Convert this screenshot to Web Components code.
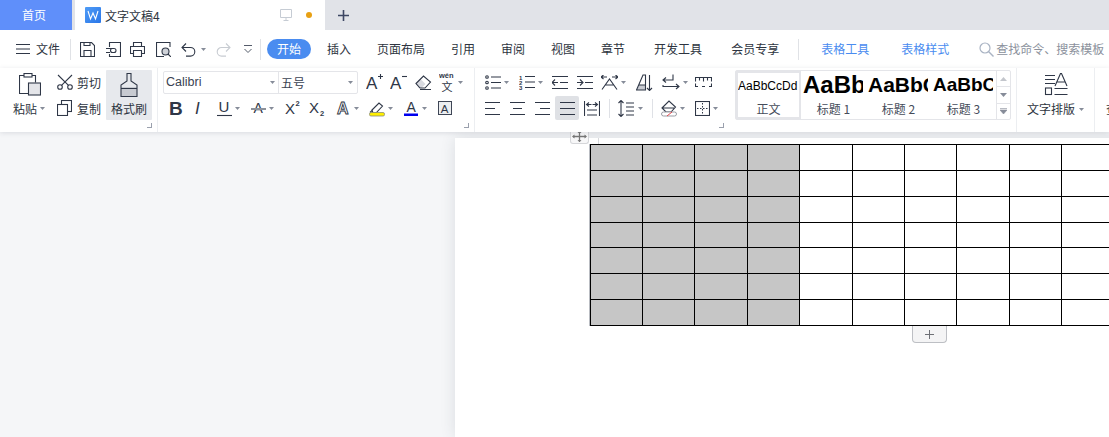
<!DOCTYPE html>
<html lang="zh"><head><meta charset="utf-8"><title>文字文稿4</title>
<style>
html,body{margin:0;padding:0;width:1109px;height:437px;overflow:hidden;background:#f5f6f8;font:12px "Noto Sans CJK SC","Liberation Sans",sans-serif;color:#2d3440}
</style></head><body>
<wps-app></wps-app>
<script>
const S='fill="none" stroke="#2f3747" stroke-width="1.1"';
const T='font-family="Liberation Sans" fill="#2f3747"';
const ICONS={
 menu:[14,10,`<path ${S} d="M0 .5h14M0 5h14M0 9.5h14"/>`],
 save:[15,15,`<path ${S} d="M.5.5h11l3 3v11H.5zM4 14.5V8.5h7v6M4 .5v3h6v-3"/>`],
 export:[15,15,`<path ${S} d="M3.5 5V.5h11v14h-11v-2.5M0 6.5h8a2 2 0 0 1 0 4H6.5a2 2 0 0 1 0-4M0 10.5h4"/>`],
 print:[15,15,`<path ${S} d="M3.5 4.500V.5h8v4M3.500 11.500H.5v-7h14v7h-3M3.500 8.500h8v6h-8z"/>`],
 preview:[15,15,`<path ${S} d="M14 5V.5H.5v14H8"/><circle cx="9.500" cy="9.500" r="3.500" fill="#cfd2d8" stroke="#2f3747" stroke-width="1.100"/><path ${S} d="M12 12l3 3"/>`],
 undo:[15,15,`<path ${S} d="M5 1.500L1 5.500l4 4M1 5.500h8.500a4.300 4.300 0 0 1 0 8.600H5"/>`],
 redo:[15,15,`<path fill="none" stroke="#c8ccd2" stroke-width="1.100" d="M10 1.500l4 4-4 4M14 5.500H5.500a4.300 4.300 0 0 0 0 8.600H10"/>`],
 more:[8,9,`<path fill="none" stroke="#555c6b" d="M0 .5h8M.5 4L4 7.500 7.500 4"/>`],
 search:[15,15,`<circle cx="6" cy="6" r="5" fill="none" stroke="#a9b3c3" stroke-width="1.200"/><path stroke="#a9b3c3" stroke-width="1.400" d="M9.500 9.500l5 5"/>`],
 paste:[22,24,`<path ${S} d="M13 2.500h3.500v7M9.500 20.500H.5v-18H5"/><rect x="5" y=".5" width="8" height="3.500" fill="#fff" stroke="#2f3747" stroke-width="1.100"/><rect x="9.500" y="10" width="12" height="12" fill="#e4e5e9" stroke="#2f3747" stroke-width="1.100"/>`],
 cut:[16,16,`<circle cx="3" cy="13" r="2.300" ${S}/><circle cx="13" cy="13" r="2.300" ${S}/><path ${S} d="M1 1l10.500 10.300M15 1L4.500 11.300"/>`],
 copy:[15,16,`<rect x="4.500" y=".5" width="10" height="11" ${S}/><rect x=".5" y="4.500" width="10" height="11" fill="#fff" stroke="#2f3747" stroke-width="1.100"/>`],
 brush:[18,24,`<path fill="#c7cad1" d="M1 14h16v9H1z"/><path ${S} d="M7 .5h4V8l6 4v11.500H1V12l6-4zM1 15.500h16"/>`],
 bold:[14,18,`<text x="0" y="15.500" font-size="19" font-weight="700" ${T}>B</text>`],
 ital:[10,18,`<text x="0" y="15" font-size="17" font-style="italic" ${T}>I</text>`],
 under:[15,18,`<text x="1.500" y="13" font-size="15" ${T}>U</text><path ${S} d="M0 16.500h15"/>`],
 strike:[15,18,`<text x="2.500" y="13.500" font-size="14" ${T}>A</text><path fill="none" stroke="#fff" stroke-width="2" d="M0 10h15"/><path ${S} d="M0 10h15"/>`],
 sup:[16,18,`<text x="0" y="15" font-size="15" ${T}>X</text><text x="10.500" y="7" font-size="7.500" font-weight="700" ${T}>2</text>`],
 sub:[18,18,`<text x="0" y="14" font-size="15" ${T}>X</text><text x="11" y="16.500" font-size="7.500" font-weight="700" ${T}>2</text>`],
 aout:[15,18,`<text x="1" y="15" font-size="16" font-weight="700" fill="#fff" stroke="#2f3747" stroke-width=".9" font-family="Liberation Sans">A</text>`],
 hilite:[16,18,`<path ${S} d="M3 11l7-7 3.500 3-6.500 7H4zM1 13.500l2-2"/><rect x=".5" y="13.500" width="15" height="3.500" rx="1.500" fill="#ffef00" stroke="#8c8d7a" stroke-width=".8"/>`],
 acolor:[15,18,`<text x="2.500" y="13" font-size="14" ${T}>A</text><rect x="0" y="14.500" width="14" height="2.500" fill="#0000ee"/>`],
 abox:[14,14,`<rect x=".5" y=".5" width="13" height="13" fill="#eceef0" stroke="#3e4656"/><text x="2.800" y="11.500" font-size="11.500" ${T}>A</text>`],
 aplus:[17,18,`<text x="0" y="16" font-size="17" ${T}>A</text><path ${S} d="M12 3.500h5M14.500 1v5"/>`],
 aminus:[17,18,`<text x="0" y="16" font-size="17" ${T}>A</text><path ${S} d="M12 3.500h5"/>`],
 eraser:[17,15,`<path fill="#d8dae0" d="M1 8.500L5.500 4l5 5-4 4H4z"/><path ${S} d="M1 8.500L8.500 1l7 6-5.500 6H5zM5 14.500h11"/>`],
 wen:[16,20,`<text x="0" y="6" font-size="7.500" font-weight="700" ${T}>wén</text><text x="2.500" y="19" font-size="11" font-family="Noto Sans CJK SC" fill="#2f3747">文</text>`],
 bullet:[16,15,`<circle cx="2" cy="2" r="1.300" ${S}/><circle cx="2" cy="7.500" r="1.300" ${S}/><circle cx="2" cy="13" r="1.300" ${S}/><path ${S} d="M6 2h10M6 7.500h10M6 13h10"/>`],
 num:[16,16,`<text x="0" y="5.500" font-size="6" font-weight="700" ${T}>1</text><text x="0" y="11" font-size="6" font-weight="700" ${T}>2</text><text x="0" y="16" font-size="6" font-weight="700" ${T}>3</text><path ${S} d="M6 2.500h10M6 8h10M6 13.500h10"/>`],
 outdent:[16,13,`<path ${S} d="M0 .5h16M8 6.500h8M0 12.500h16M0 6.500h6M3 3.500l-3 3 3 3"/>`],
 indent:[16,13,`<path ${S} d="M0 .5h16M8 6.500h8M0 12.500h16M0 6.500h6M3 3.500l3 3-3 3"/>`],
 cnlay:[17,15,`<path ${S} d="M0 2h6M2.500 0L0 2l2.500 2M17 2h-6M14.500 0L17 2l-2.500 2M1 14.500L8.500 4 16 14.500M4 10h9"/>`],
 sort:[17,17,`<path fill="#c7cad1" d="M3 11h6v5H1z"/><path ${S} d="M.5 16L7 1h2.500v15zM.5 16h9M3 11h6.500M13.500 1v15.500M11 14l2.500 2.500L16 14"/>`],
 ret:[18,16,`<path ${S} d="M11 .5v5.500H1M4 3.500L1 6l3 2.500M1 11v1.500h16M14 10l3 2.500-3 2.500"/>`],
 ruler:[17,10,`<path ${S} d="M.5 4.500v-4h16v4M4.500 .5v3M8.500 .5v4M12.500 .5v3M.5 6.500v3h2.500M7 9.500h3M14 9.500h2.500v-3"/>`],
 al:[15,13,`<path ${S} d="M0 .5h15M0 6.500h10M0 12.500h15"/>`],
 ac:[15,13,`<path ${S} d="M0 .5h15M3 6.500h9M0 12.500h15"/>`],
 ar:[15,13,`<path ${S} d="M0 .5h15M5 6.500h10M0 12.500h15"/>`],
 aj:[15,13,`<path ${S} d="M0 .5h15M0 6.500h15M0 12.500h15"/>`],
 dist:[16,15,`<path ${S} d="M.5 0v15M15.500 0v15M3 9h10M3 14h10M2.500 3.500h5M5 1.500l-2.500 2 2.500 2M8.500 3.500h5M11 1.500l2.500 2-2.500 2"/>`],
 lspace:[17,17,`<path ${S} d="M3 .5v16M.5 3L3 .5 5.500 3M.5 14L3 16.500 5.500 14M8 3h8M8 7h8M8 11h8M8 15h8"/>`],
 shade:[16,18,`<path ${S} d="M1 9l7-7 6.500 6-4.500 5H5zM1 9h13"/><rect x=".5" y="13" width="15" height="4" rx="2" fill="#fff" stroke="#9a9da5"/><path stroke="#e5484d" d="M6 17l5-4"/>`],
 border:[15,15,`<rect x=".5" y=".5" width="14" height="14" ${S}/><path fill="none" stroke="#2f3747" stroke-dasharray="1.500 1.500" d="M7.500 2v11M2 7.500h11"/>`],
 arrange:[24,23,`<path ${S} d="M1 2.500h10M1 6.500h10M1 10.500h10"/><rect x="1.500" y="15" width="6" height="6.500" ${S}/><path ${S} d="M11 13l5.500-12.500h1L23 13M13 9h8.500M10.500 15.500h13M10.500 21.500h13"/>`]
};
function svg(name){const [w,h,b]=ICONS[name];return `<svg xmlns="http://www.w3.org/2000/svg" width="${w}" height="${h}" viewBox="0 0 ${w} ${h}" style="display:block;flex:none">${b}</svg>`}
const CARET=`<svg width="5" height="3" viewBox="0 0 5 3" style="display:block;flex:none"><path d="M0 0h5L2.500 3z" fill="#868c99"/></svg>`;
class Base extends HTMLElement{
 constructor(){super();this.attachShadow({mode:'open'})}
 connectedCallback(){this.shadowRoot.innerHTML=this.render()}
}
customElements.define('wps-icon',class extends Base{
 render(){return `<style>:host{display:block;flex:none}</style>${svg(this.getAttribute('name'))}`}
});
customElements.define('wps-tool',class extends Base{
 render(){const w=this.getAttribute('w'),act=this.hasAttribute('active');
  return `<style>:host{display:flex;flex:none;align-items:center;gap:3px;height:26px;width:${w}px}
  .box{display:flex;align-items:center;justify-content:center;width:24px;height:24px;border-radius:2px;background:#dfe1e5}</style>
  ${act?`<div class="box">${svg(this.getAttribute('icon'))}</div>`:svg(this.getAttribute('icon'))}${this.hasAttribute('caret')?CARET:''}`}
});
customElements.define('wps-vsep',class extends Base{
 render(){return `<style>:host{display:flex;flex:none;width:${this.getAttribute('w')}px;height:26px;align-items:center}
 i{display:block;width:1px;height:19px;background:#dfe1e6}</style><i></i>`}
});
customElements.define('wps-corner',class extends Base{
 render(){return `<style>:host{position:absolute;right:${this.getAttribute('r')}px;top:55px;width:5px;height:5px;border-right:1px solid #9aa0ad;border-bottom:1px solid #9aa0ad;box-sizing:border-box}</style>`}
});
customElements.define('wps-tabbar',class extends Base{
 render(){return `<style>:host{display:flex;height:30px;background:#e1e3e8;color:#2d3440}
 .home{width:72px;background:#5f8ffa;color:#fff;display:flex;align-items:center;justify-content:center;padding:0 4px 2px 0;box-sizing:border-box;margin-right:3px}
 .doc{width:250px;background:#fff;display:flex;align-items:center;padding-left:10px;box-sizing:border-box}
 .w{width:16px;height:16px;border-radius:1px;background:linear-gradient(135deg,#4f9cf6,#2a76e8);margin-right:4px;flex:none}
 .w svg{display:block}
 .name{flex:1}
 .dot{width:6px;height:6px;border-radius:50%;background:#e8a013;margin:0 13px 0 14px}
 .plus{width:36px;display:flex;align-items:center;justify-content:center}</style>
 <div class="home">首页</div>
 <div class="doc"><div class="w"><svg width="16" height="16" viewBox="0 0 16 16"><path d="M3 4l2.500 8L8 6l2.500 6L13 4" fill="none" stroke="#fff" stroke-width="1.100"/></svg></div>
 <span class="name">文字文稿4</span>
 <svg width="12" height="12" viewBox="0 0 12 12"><path d="M.5.5h11v8H.5zM6 8.500V11.500M3.500 11.500h5" fill="none" stroke="#c6ccd4"/></svg>
 <span class="dot"></span></div>
 <div class="plus"><svg width="11" height="11" viewBox="0 0 11 11"><path d="M5.500 0v11M0 5.500h11" stroke="#3d4763" stroke-width="1.600"/></svg></div>`}
});
customElements.define('wps-menubar',class extends Base{
 render(){
 const m=(t,x,c='')=>`<span class="t ${c}" style="margin-left:${x}px">${t}</span>`;
 return `<style>:host{display:flex;align-items:center;height:38px;background:#fff;padding-left:16px;white-space:nowrap;color:#2d3440;overflow:hidden}
 .t{margin-bottom:2px}
 .sep{width:1px;height:21px;background:#e0e2e6;flex:none}
 .pill{background:#4a8cf0;color:#fff;border-radius:10px;width:44px;height:20px;line-height:19px;text-align:center}
 .b{color:#4a8cf0}.g{color:#8b919c}
 .c{display:flex;flex:none;align-items:center;gap:5px}
 wps-icon{flex:none}</style>
 <wps-icon name="menu"></wps-icon>${m('文件',6)}
 <span class="sep" style="margin-left:10px"></span>
 <wps-icon name="save" style="margin-left:9px"></wps-icon>
 <wps-icon name="export" style="margin-left:11px"></wps-icon>
 <wps-icon name="print" style="margin-left:9px"></wps-icon>
 <wps-icon name="preview" style="margin-left:11px"></wps-icon>
 <div class="c" style="margin-left:10px"><wps-icon name="undo"></wps-icon>${CARET}</div>
 <wps-icon name="redo" style="margin-left:10px"></wps-icon>
 <wps-icon name="more" style="margin-left:13px"></wps-icon>
 <span class="sep" style="margin-left:8px"></span>
 <span class="pill" style="margin-left:6px">开始</span>
 ${m('插入',16)}${m('页面布局',26)}${m('引用',26)}${m('审阅',26)}${m('视图',26)}${m('章节',26)}${m('开发工具',29)}${m('会员专享',29)}
 <span class="sep" style="margin-left:19px"></span>
 ${m('表格工具',22,'b')}${m('表格样式',32,'b')}
 <wps-icon name="search" style="margin-left:30px"></wps-icon>${m('查找命令、搜索模板',2,'g')}`}
});
customElements.define('wps-clip-group',class extends Base{
 render(){return `<style>:host{position:relative;display:flex;flex:none;width:157px;height:63px;box-sizing:content-box;border-right:1px solid #eceef1;padding-top:1px;color:#2d3440}
 .paste{width:57px;display:flex;flex-direction:column;padding-left:13px;box-sizing:border-box}
 .paste wps-icon{margin:4px 0 0 6px}
 .pl{display:flex;align-items:center;gap:3px;height:22px}
 .mid{width:49px}.row{display:flex;align-items:center;height:26px}
 .row wps-icon{width:20px}
 .brush{width:46px;height:50px;margin-top:1px;background:#e7e9ed;display:flex;flex-direction:column;align-items:center;border-radius:1px}
 .brush wps-icon{margin:3px 0 2px}.bl{line-height:20px}</style>
 <div class="paste"><wps-icon name="paste"></wps-icon><div class="pl">粘贴${CARET}</div></div>
 <div class="mid"><div class="row"><wps-icon name="cut"></wps-icon>剪切</div><div class="row"><wps-icon name="copy"></wps-icon>复制</div></div>
 <div class="brush"><wps-icon name="brush"></wps-icon><div class="bl">格式刷</div></div>
 <wps-corner r="5"></wps-corner>`}
});
customElements.define('wps-font-group',class extends Base{
 render(){const t=(i,w,c)=>`<wps-tool icon="${i}" w="${w}" ${c?'caret':''}></wps-tool>`;
 return `<style>:host{position:relative;display:block;flex:none;width:316px;height:63px;padding-top:1px;border-right:1px solid #eceef1}
 .row{display:flex;height:26px;align-items:center}
 .r1{padding-left:5px}.r2{padding-left:11px}
 .box{display:flex;flex:none;width:195px;height:23px;border:1px solid #e4e5e9;border-radius:2px;box-sizing:border-box;margin-right:8px}
 .f{display:flex;align-items:center;justify-content:space-between;padding:0 3px 0 2px;box-sizing:border-box;color:#3a4252}
 .a{width:115px;border-right:1px solid #e4e5e9;font:12.500px "Liberation Sans",sans-serif}.b{flex:1;padding-right:4px;padding-left:2px}</style>
 <div class="row r1"><div class="box"><div class="f a">Calibri${CARET}</div><div class="f b">五号${CARET}</div></div>
 ${t('aplus',24)}${t('aminus',25)}${t('eraser',24)}${t('wen',30,1)}</div>
 <div class="row r2">${t('bold',26)}${t('ital',22)}${t('under',34,1)}${t('strike',34,1)}${t('sup',24)}${t('sub',27)}${t('aout',33,1)}${t('hilite',35,1)}${t('acolor',34,1)}${t('abox',14)}</div>
 <wps-corner r="5"></wps-corner>`}
});
customElements.define('wps-para-group',class extends Base{
 render(){const t=(i,w,c)=>`<wps-tool icon="${i}" w="${w}" ${c?'caret':''}></wps-tool>`;
 return `<style>:host{position:relative;display:block;flex:none;width:254px;height:63px;padding-top:1px;border-right:1px solid #fff}
 .row{display:flex;height:26px;align-items:center;padding-left:10px}</style>
 <div class="row">${t('bullet',34,1)}${t('num',33,1)}${t('outdent',25)}${t('indent',24)}${t('cnlay',35,1)}${t('sort',26)}${t('ret',33,1)}${t('ruler',17)}</div>
 <div class="row">${t('al',25)}${t('ac',25)}${t('ar',20)}<wps-tool icon="aj" w="29" active></wps-tool>${t('dist',25)}<wps-vsep w="9"></wps-vsep>${t('lspace',34,1)}<wps-vsep w="9"></wps-vsep>${t('shade',34,1)}${t('border',29,1)}</div>
 <wps-corner r="5"></wps-corner>`}
});
customElements.define('wps-style-cell',class extends Base{
 render(){const sel=this.hasAttribute('selected');
 return `<style>:host{display:block;flex:none;width:65px;height:48px;box-sizing:border-box;overflow:hidden;${sel?'border:2px solid #e4e5e9;':''}}
 .p{height:${sel?26:28}px;padding-left:${sel?0:2}px;margin-right:${sel?0:3}px;overflow:hidden;white-space:nowrap;display:flex;align-items:center;font-family:"Liberation Sans",sans-serif;color:#000}
 .l{text-align:center;line-height:20px;color:#454c5a}</style>
 <div class="p"><slot name="s"></slot></div><div class="l"><slot></slot></div>`}
});
customElements.define('wps-gallery-group',class extends Base{
 render(){const a=`<svg width="7" height="4" viewBox="0 0 7 4"><path d="M0 4h7L3.500 0z" fill="#c3c6cc"/></svg>`,
 d=`<svg width="7" height="4" viewBox="0 0 7 4"><path d="M0 0h7L3.500 4z" fill="#868c99"/></svg>`,
 dd=`<svg width="7" height="6" viewBox="0 0 7 6"><path d="M0 .5h7M0 2h7L3.500 6z" fill="#868c99" stroke="#868c99" stroke-width=".6"/></svg>`;
 return `<style>:host{display:block;flex:none;width:287px;padding:2px 0 0 5px;box-sizing:border-box;height:64px;border-right:1px solid #eceef1}
 .g{display:flex;width:276px;height:50px;border:1px solid #e4e5e9;border-radius:2px;box-sizing:border-box}
 .s{flex:1;border-left:1px solid #e4e5e9;display:flex;flex-direction:column}
 .s div{flex:1;display:flex;align-items:center;justify-content:center}.s div+div{border-top:1px solid #e4e5e9}
 b{display:block}</style>
 <div class="g">
 <wps-style-cell selected><span slot="s" style="font-size:12px">AaBbCcDd</span>正文</wps-style-cell>
 <wps-style-cell><b slot="s" style="font-size:24px">AaBb</b>标题 1</wps-style-cell>
 <wps-style-cell><b slot="s" style="font-size:21px">AaBbCc</b>标题 2</wps-style-cell>
 <wps-style-cell><b slot="s" style="font-size:19px">AaBbCc</b>标题 3</wps-style-cell>
 <div class="s"><div>${a}</div><div>${d}</div><div>${dd}</div></div>
 </div>`}
});
customElements.define('wps-arrange-group',class extends Base{
 render(){return `<style>:host{display:flex;flex-direction:column;align-items:center;flex:none;width:78px;height:64px;box-sizing:border-box;padding-top:5px;border-right:1px solid #eceef1;color:#2d3440}
 .l{display:flex;align-items:center;gap:4px;margin-top:3px;line-height:20px}</style>
 <wps-icon name="arrange"></wps-icon><div class="l">文字排版${CARET}</div>`}
});
customElements.define('wps-ribbon',class extends Base{
 render(){return `<style>:host{display:flex;position:relative;z-index:2;height:64px;background:#fff;box-shadow:0 1px 5px rgba(40,50,70,.13);white-space:nowrap;overflow:hidden}
 .last{padding:32px 0 0 11px;color:#2d3440}</style>
 <wps-clip-group></wps-clip-group><wps-font-group></wps-font-group><wps-para-group></wps-para-group><wps-gallery-group></wps-gallery-group><wps-arrange-group></wps-arrange-group><div class="last">查找替换</div>`}
});
customElements.define('wps-table',class extends Base{
 render(){const cols=[52,52,53,52,53,52,52,53,52,52],rows=[26,26,26,25,26,26,26];
 const tr=rows.map(h=>`<tr style="height:${h}px">${cols.map((_,i)=>`<td class="${i<4?'g':''}"></td>`).join('')}</tr>`).join('');
 return `<style>:host{display:block;width:524px;box-shadow:-1px 0 0 #b9bcc2}
 table{border-collapse:collapse;table-layout:fixed;width:521px;border-top:1px solid #000}
 td{border:1px solid #000;padding:0;background:#fff}td.g{background:#c6c6c6}</style>
 <table><colgroup>${cols.map(c=>`<col style="width:${c}px">`).join('')}</colgroup>${tr}</table>`}
});
customElements.define('wps-page',class extends Base{
 render(){return `<style>:host{display:block;position:relative;width:700px;height:299px;box-sizing:border-box;background:#fff;padding:6px 0 0 135px;box-shadow:0 0 14px rgba(50,60,80,.13)}
 .move{position:absolute;left:115px;top:-8px;width:19px;height:14px;box-sizing:border-box;background:#f7f7f8;border:1px solid #d5d6d9;border-top:0;border-radius:0 0 3px 3px;display:flex;align-items:center;justify-content:center}
 .tick{position:absolute;left:143px;top:0;width:1px;height:6px;background:#d8d9dc}
 .add{position:absolute;left:457px;top:188px;width:35px;height:17px;box-sizing:border-box;background:#f4f4f5;border:1px solid #bdbfc4;border-top:0;border-radius:0 0 4px 4px;display:flex;align-items:center;justify-content:center}</style>
 <div class="move"><svg width="15" height="11" viewBox="0 0 15 11"><path d="M7.500 0v11M1 5.500h13" stroke="#777" stroke-width="1.300"/><path d="M5.500 2h4L7.500 0zM5.500 9h4l-2 2zM2.500 3.500v4L0 5.500zM12.500 3.500v4l2.500-2z" fill="#777"/></svg></div>
 <div class="tick"></div>
 <wps-table></wps-table>
 <div class="add"><svg width="9" height="9" viewBox="0 0 9 9"><path d="M4.500 0v9M0 4.500h9" stroke="#6e7076"/></svg></div>`}
});
customElements.define('wps-doc',class extends Base{
 render(){return `<style>:host{display:block;height:305px;box-sizing:border-box;padding:6px 0 0 455px;background:#f5f6f8;overflow:hidden}</style><wps-page></wps-page>`}
});
customElements.define('wps-app',class extends Base{
 render(){return `<style>:host{display:block;width:1109px;height:437px;overflow:hidden}</style>
 <wps-tabbar></wps-tabbar><wps-menubar></wps-menubar><wps-ribbon></wps-ribbon><wps-doc></wps-doc>`}
});
</script>
</body></html>
